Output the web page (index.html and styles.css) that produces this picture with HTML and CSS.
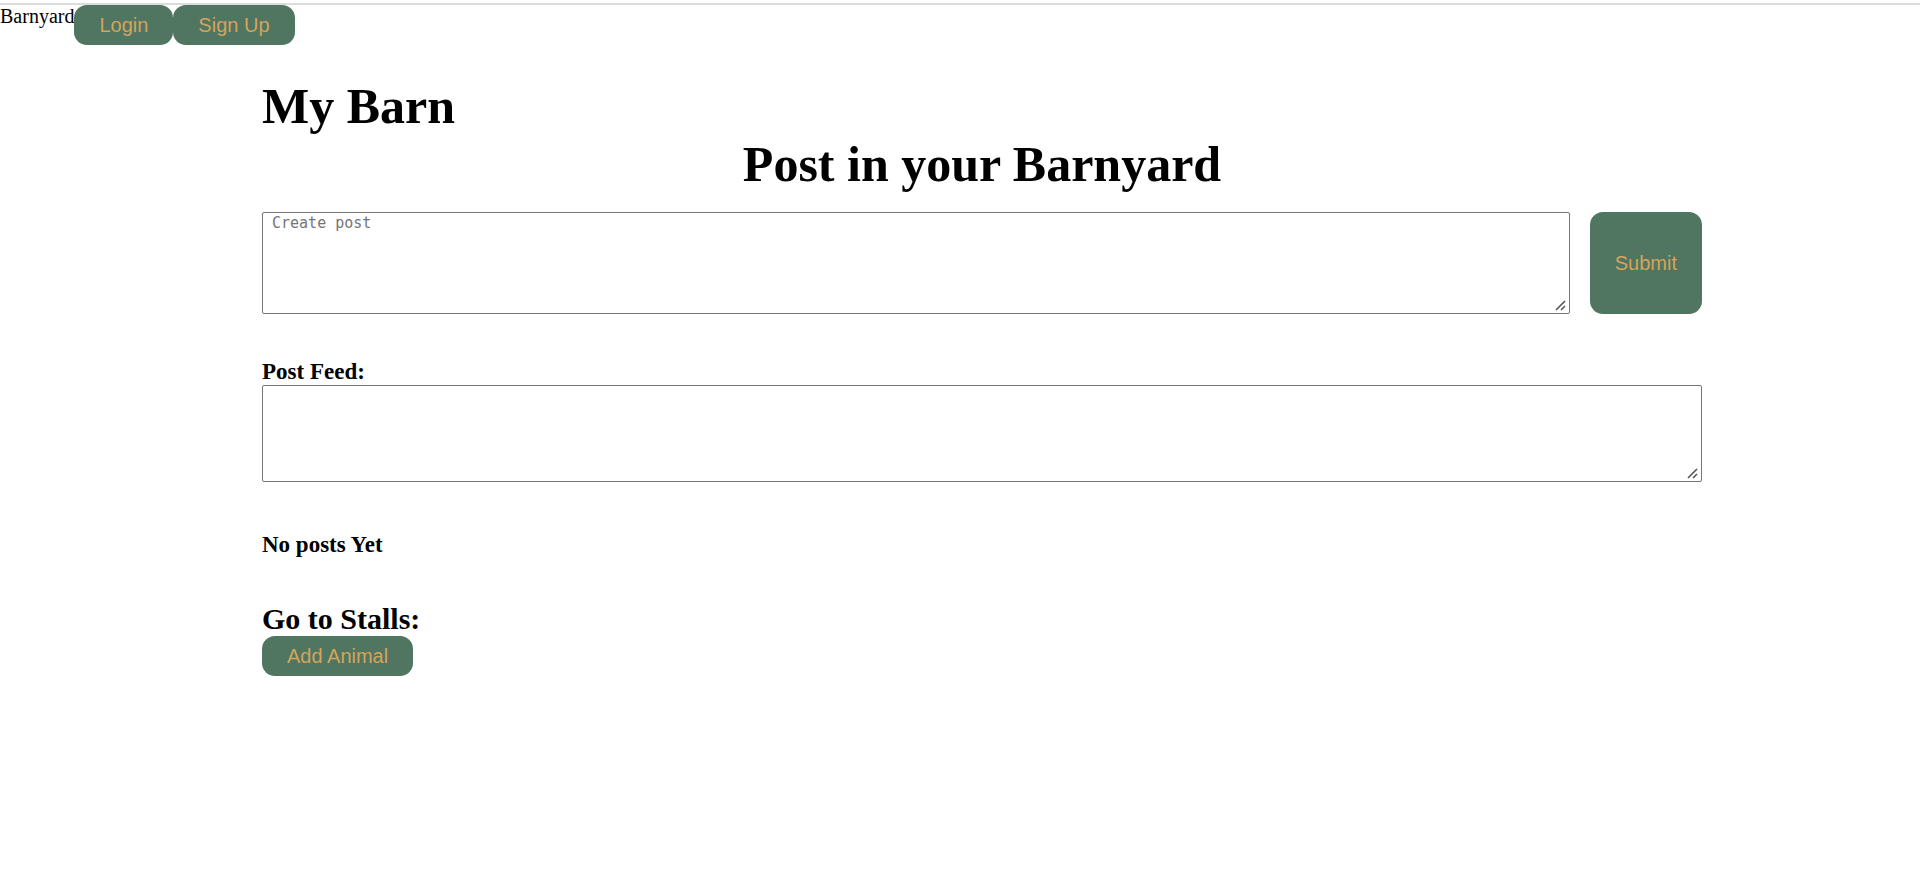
FILE: index.html
```html
<!DOCTYPE html>
<html lang="en">
<head>
<meta charset="utf-8">
<title>Barnyard</title>
<link rel="stylesheet" href="styles.css">
</head>
<body>
<header class="topbar">
  <nav class="nav">
    <span class="brand">Barnyard</span>
    <button class="btn" type="button">Login</button>
    <button class="btn" type="button">Sign Up</button>
  </nav>
</header>
<div class="page">
  <main class="barn">
    <h1 class="title">My Barn</h1>
    <h1 class="title title-center" id="post-title">Post in your Barnyard</h1>
    <form class="post-form">
      <textarea class="box post-input" placeholder="Create post" aria-labelledby="post-title"></textarea>
      <button class="btn" type="button">Submit</button>
    </form>
    <label class="subtitle" for="feed">Post Feed:</label>
    <textarea class="box feed" id="feed"></textarea>
    <h3 class="subtitle">No posts Yet</h3>
    <h2 class="stalls">Go to Stalls:</h2>
    <button class="btn" type="button">Add Animal</button>
  </main>
</div>
</body>
</html>
```
FILE: styles.css
```css
* {
  box-sizing: border-box;
}

body {
  margin: 0;
  background: #fff;
  color: #000;
  font-family: "Liberation Serif", "Times New Roman", serif;
  font-size: 20px;
}

h1, h2, h3 {
  margin: 0;
}

.topbar {
  padding-top: 3px;
}

.nav {
  display: flex;
  align-items: flex-start;
  border-top: 2px solid #dcdcdc;
}

.brand {
  line-height: 23px;
}

.btn {
  padding: 9px 25px;
  border: 0;
  border-radius: 13px;
  background: #507661;
  color: #d4a35c;
  font-family: "Liberation Sans", Arial, sans-serif;
  font-size: 20px;
  line-height: 22px;
}

.page {
  padding: 32px 0 0 44px;
}

.barn {
  max-width: 1440px;
  margin: 0 auto;
}

.title {
  font-size: 50px;
  line-height: 58px;
}

.title-center {
  text-align: center;
}

.post-form {
  display: flex;
  gap: 20px;
  margin: 19px 0 44px;
}

.box {
  display: block;
  margin: 0;
  padding: 1px 9px;
  border: 1px solid #767676;
  border-radius: 2px;
  background: #fff;
  font-family: "DejaVu Sans Mono", monospace;
  font-size: 15px;
}

.box::placeholder {
  color: #757575;
}

.box::-webkit-resizer {
  background: url("data:image/svg+xml,%3Csvg xmlns='http://www.w3.org/2000/svg' width='15' height='15'%3E%3Cpath d='M2 12L11 3M7 12L11 8' stroke='%23555' stroke-width='1.6' fill='none'/%3E%3C/svg%3E") no-repeat right bottom;
}

.post-input {
  flex: 1;
  height: 102px;
}

.feed {
  width: 100%;
  height: 97px;
  margin-bottom: 49px;
}

.subtitle {
  display: block;
  font-size: 23px;
  font-weight: bold;
  line-height: 27px;
}

.stalls {
  margin-top: 44px;
  font-size: 30px;
  line-height: 34px;
}
```
